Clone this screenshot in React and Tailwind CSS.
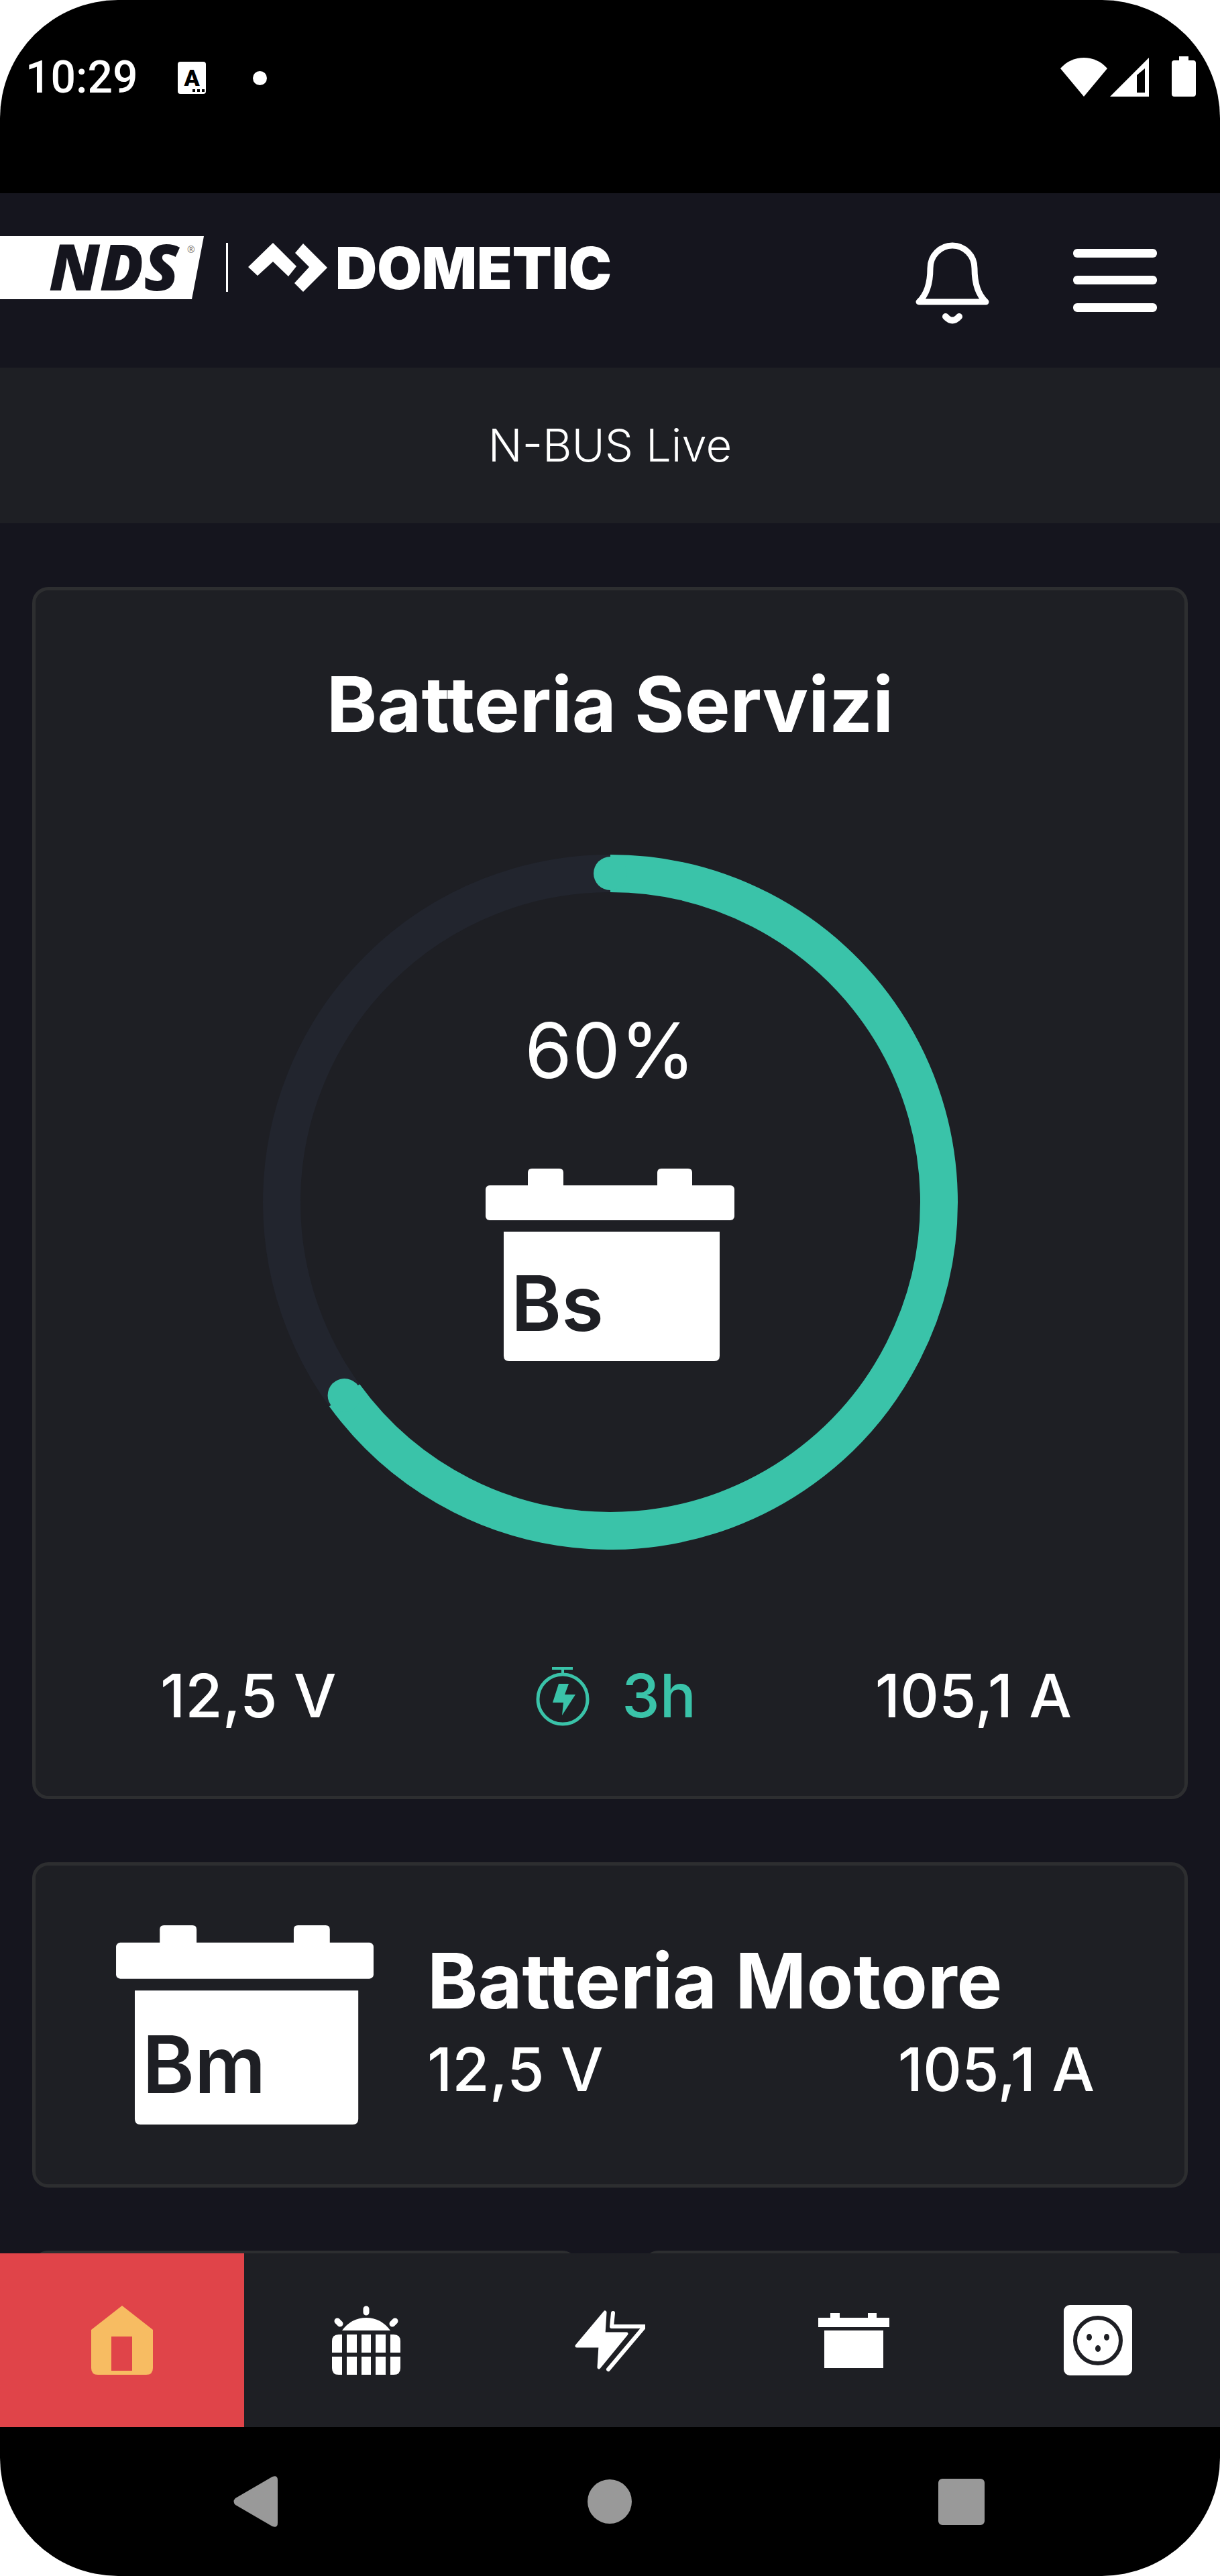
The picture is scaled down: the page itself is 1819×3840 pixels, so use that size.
import { useState } from 'react';
import clsx from 'clsx';

const TEAL = '#3ac3a9';

const WifiIcon = () => (
  <svg viewBox="0 0 70 58" className="w-[70px] h-[58px]" fill="#fff">
    <path d="M35 58 0 16C10 5 22 0 35 0s25 5 35 16Z" />
  </svg>
);

const SignalIcon = () => (
  <svg viewBox="0 0 58 58" className="w-[58px] h-[58px]" fill="#fff" fillRule="evenodd">
    <path d="M0 58 58 0V58ZM40 26V52H52V16Z" />
  </svg>
);

const PhoneBatteryIcon = () => (
  <svg viewBox="0 0 36 60" className="w-9 h-[60px]" fill="#fff">
    <path d="M11 0H25V6H32Q36 6 36 10V56Q36 60 32 60H4Q0 60 0 56V10Q0 6 4 6H11Z" />
  </svg>
);

const KeyboardIcon = () => (
  <svg viewBox="0 0 42 48" className="w-[42px] h-12">
    <rect width="42" height="48" rx="4" fill="#fff" />
    <text x="21" y="36" textAnchor="middle" fontFamily="Roboto, sans-serif" fontWeight="900" fontSize="34" fill="#000">A</text>
    <g fill="#000">
      <rect x="22" y="41" width="4" height="4" />
      <rect x="29" y="41" width="4" height="4" />
      <rect x="36" y="41" width="4" height="4" />
    </g>
  </svg>
);

const Logo = () => (
  <svg viewBox="0 -26 920 146" className="w-[920px] h-[146px]" role="img" aria-label="NDS Dometic">
    <path d="M0 0H304L286 94H0Z" fill="#fff" />
    <text x="73" y="81" fontFamily="'Open Sans', sans-serif" fontStyle="italic" fontWeight="800" fontSize="96" fill="#15151e">NDS</text>
    <text x="279" y="25" fontFamily="'Open Sans', sans-serif" fontSize="14" fill="#777">®</text>
    <rect x="337" y="10" width="3" height="73" fill="#fff" />
    <path d="M407 10 442 45 430 60 407 38 384 59 370 46Z" fill="#fff" />
    <path d="M452 11 488 47 452 83 439 70 461 46 440 25Z" fill="#fff" />
    <text x="500" y="79" fontFamily="Inter, sans-serif" fontWeight="900" fontSize="86" fill="#fff">DOMETIC</text>
  </svg>
);

const BellIcon = () => (
  <svg viewBox="0 0 110 122" className="w-[110px] h-[122px]" fill="none" stroke="#fff" strokeWidth="9" strokeLinecap="round" strokeLinejoin="round">
    <path d="M5 89H105C93 78 88 61 88 39A33 34 0 0 0 22 39C22 61 17 78 5 89Z" />
    <path d="M45 111Q55 122 65 111" strokeWidth="10" />
  </svg>
);

const MenuIcon = () => (
  <svg viewBox="0 0 125 94" className="w-[125px] h-[94px]" fill="#fff">
    <rect width="125" height="13" rx="6" />
    <rect y="40" width="125" height="13" rx="6" />
    <rect y="81" width="125" height="13" rx="6" />
  </svg>
);

const BatteryBox = ({ code, className }) => (
  <svg viewBox="0 0 371 287" className={className} fill="#fff">
    <path d="M63 30V6Q63 0 69 0H110Q116 0 116 6V30Z" />
    <path d="M256 30V6Q256 0 262 0H302Q308 0 308 6V30Z" />
    <rect y="25" width="371" height="52" rx="6" />
    <path d="M27 94H349V279Q349 287 341 287H35Q27 287 27 279Z" />
    <text x="38" y="242" fontFamily="Inter, sans-serif" fontWeight="600" fontSize="114" fill="#1e1f24">{code}</text>
  </svg>
);

const TimerIcon = () => (
  <svg viewBox="0 0 80 90" className="w-20 h-[90px]" fill="none" stroke={TEAL}>
    <circle cx="40" cy="50" r="37" strokeWidth="5" />
    <path d="M24 4H55M40 4V13" strokeWidth="4" />
    <path d="M34 27H49L43 43H59L39 74L41 55H25Z" fill={TEAL} stroke="none" />
  </svg>
);

const HomeIcon = () => (
  <svg viewBox="0 0 106 106" className="w-[106px] h-[106px]" fill="#f7bc62" fillRule="evenodd">
    <path d="M53 1 99 37V94Q99 104 89 104H17Q7 104 7 94V37ZM37 47V98H68V47Z" />
  </svg>
);

const SolarIcon = () => (
  <svg viewBox="0 0 106 106" className="w-[106px] h-[106px]" fill="#fff">
    <path d="M17 38Q31 19 53 19T89 38Z" />
    <path d="M53 6V11M10 24 14 28M96 24 92 28" stroke="#fff" strokeWidth="9" strokeLinecap="round" />
    <path d="M12 44H17V71H2V54Q2 44 12 44ZM24 44H39V71H24ZM46 44H60V71H46ZM67 44H82V71H67ZM89 44H94Q104 44 104 54V71H89Z" />
    <path d="M2 77H17V104H12Q2 104 2 94ZM24 77H39V104H24ZM46 77H60V104H46ZM67 77H82V104H67ZM89 77H104V94Q104 104 94 104H89Z" />
  </svg>
);

const BoltIcon = () => (
  <svg viewBox="0 0 106 106" className="w-[106px] h-[106px]" fill="#fff" stroke="#fff" strokeLinecap="round" strokeLinejoin="round">
    <path d="M46 11 44 43H78L37 93 39 61H4Z" strokeWidth="5" />
    <path d="M58 12 56 32H105L51 96" strokeWidth="6" fill="none" />
  </svg>
);

const SmallBatteryIcon = () => (
  <svg viewBox="0 0 106 106" className="w-[106px] h-[106px]" fill="#fff">
    <path d="M0 19H18V12H32V19H74V12H87V19H106V33H0Z" />
    <rect x="9" y="38" width="88" height="56" />
  </svg>
);

const SocketIcon = () => (
  <svg viewBox="0 0 106 106" className="w-[106px] h-[106px]">
    <rect x="2" width="102" height="105" rx="9" fill="#fff" />
    <circle cx="53" cy="53" r="34" fill="none" stroke="#1e1f24" strokeWidth="6" />
    <g fill="#1e1f24">
      <ellipse cx="40" cy="48" rx="4" ry="5" />
      <ellipse cx="66" cy="48" rx="4" ry="5" />
      <ellipse cx="53" cy="65" rx="4" ry="5" />
    </g>
  </svg>
);

const tabs = [
  { id: 'home', label: 'Home', Icon: HomeIcon },
  { id: 'solar', label: 'Solare', Icon: SolarIcon },
  { id: 'power', label: 'Energia', Icon: BoltIcon },
  { id: 'battery', label: 'Batteria', Icon: SmallBatteryIcon },
  { id: 'socket', label: 'Presa', Icon: SocketIcon },
];

const ChargeRing = ({ level, children }) => {
  // the gauge leaves a small offset past the nominal level
  const angle = ((level + 5) / 100) * 2 * Math.PI;
  const x = 518 + 490 * Math.sin(angle);
  const y = 518 - 490 * Math.cos(angle);
  return (
    <div className="relative w-[1036px] h-[1036px]">
      <svg viewBox="0 0 1036 1036" className="absolute inset-0 w-full h-full" fill="none" strokeWidth="56">
        <circle cx="518" cy="518" r="490" stroke="#22252e" />
        <path d={`M518 28A490 490 0 ${angle > Math.PI ? 1 : 0} 1 ${x} ${y}`} stroke={TEAL} />
        <circle cx="518" cy="28" r="25" fill={TEAL} stroke="none" />
        <circle cx={x} cy={y} r="25" fill={TEAL} stroke="none" />
      </svg>
      <div className="relative h-full flex flex-col items-center pt-[220px]">{children}</div>
    </div>
  );
};

const Card = ({ className, children }) => (
  <section className={clsx('bg-[#1e1f24] border-[5px] border-[#2d2e30] rounded-3xl', className)}>{children}</section>
);

const App = () => {
  const [active, setActive] = useState('home');

  return (
    <div className="bg-white">
      <div className="h-screen flex flex-col overflow-hidden rounded-[176px] bg-black text-white font-[Inter,sans-serif]">
        {/* Status bar */}
        <div className="h-[288px] shrink-0 flex items-start justify-between pt-20 pl-[38px] pr-9">
          <div className="flex items-center h-[72px]">
            <span className="font-[Roboto,sans-serif] font-medium text-[66px] leading-[72px]">10:29</span>
            <div className="ml-[60px]"><KeyboardIcon /></div>
            <div className="ml-[70px] w-[21px] h-[21px] rounded-full bg-white" />
          </div>
          <div className="flex items-end h-16">
            <WifiIcon />
            <div className="ml-1"><SignalIcon /></div>
            <div className="ml-[34px]"><PhoneBatteryIcon /></div>
          </div>
        </div>

        {/* Header */}
        <header className="h-[260px] shrink-0 bg-[#15151e] flex items-start justify-between pr-[94px]">
          <div className="pt-[38px]"><Logo /></div>
          <div className="flex items-start">
            <button aria-label="Notifiche" className="pt-[73px]"><BellIcon /></button>
            <button aria-label="Menu" className="pt-[83px] ml-[125px]"><MenuIcon /></button>
          </div>
        </header>

        <div className="h-[232px] shrink-0 bg-[#1e1f24] flex items-center justify-center text-[67px] leading-[88px] font-light">
          <h1>N-BUS Live</h1>
        </div>

        <main className="flex-1 min-h-0 overflow-hidden bg-[#15151e] px-12 pt-[95px] flex flex-col gap-[94px]">
          <Card className="shrink-0 pt-[100px] pb-[89px] flex flex-col items-center">
            <h2 className="text-[114px] leading-[140px] font-bold">Batteria Servizi</h2>
            <div className="mt-[154px]">
              <ChargeRing level={60}>
                <span className="text-[114px] leading-[144px]">60%</span>
                <BatteryBox code="Bs" className="w-[371px] h-[287px] mt-[104px]" />
              </ChargeRing>
            </div>
            <div className="mt-[158px] w-full pl-[186px] pr-[168px] grid grid-cols-[1fr_auto_1fr] items-center text-[90px] leading-[120px] font-medium">
              <span>12,5 V</span>
              <div className="flex items-center gap-12 text-[#3ac3a9]">
                <TimerIcon />
                <span>3h</span>
              </div>
              <span className="text-right">105,1 A</span>
            </div>
          </Card>

          <Card className="h-[485px] shrink-0 flex items-center pl-[120px] pr-[134px] gap-20">
            <BatteryBox code="Bm" className="w-[384px] h-[297px] shrink-0" />
            <div className="flex-1 pb-3">
              <h2 className="text-[114px] leading-[144px] font-bold">Batteria Motore</h2>
              <div className="flex justify-between text-[90px] leading-[120px] font-medium">
                <span>12,5 V</span>
                <span>105,1 A</span>
              </div>
            </div>
          </Card>

          <div className="shrink-0 grid grid-cols-2 gap-24">
            <Card className="h-[485px]" />
            <Card className="h-[485px]" />
          </div>
        </main>

        <nav className="h-[259px] shrink-0 grid grid-cols-5 bg-[#1e1f24]">
          {tabs.map(({ id, label, Icon }) => (
            <button
              key={id}
              aria-label={label}
              onClick={() => setActive(id)}
              className={clsx('flex items-center justify-center', active === id && 'bg-[#e04449]')}
            >
              <Icon />
            </button>
          ))}
        </nav>

        {/* System navigation */}
        <div className="h-[222px] shrink-0 grid grid-cols-3 px-[124px] items-center justify-items-center">
          <button aria-label="Indietro">
            <svg viewBox="0 0 76 76" className="w-[76px] h-[76px]" fill="#999">
              <path d="M58 1Q66-2 66 6V70Q66 78 58 75L3 43Q-2 38 3 33Z" />
            </svg>
          </button>
          <button aria-label="Schermata principale" className="w-[66px] h-[66px] rounded-full bg-[#999]" />
          <button aria-label="Recenti" className="w-[69px] h-[69px] rounded-md bg-[#999]" />
        </div>
      </div>
    </div>
  );
};

export default App;
